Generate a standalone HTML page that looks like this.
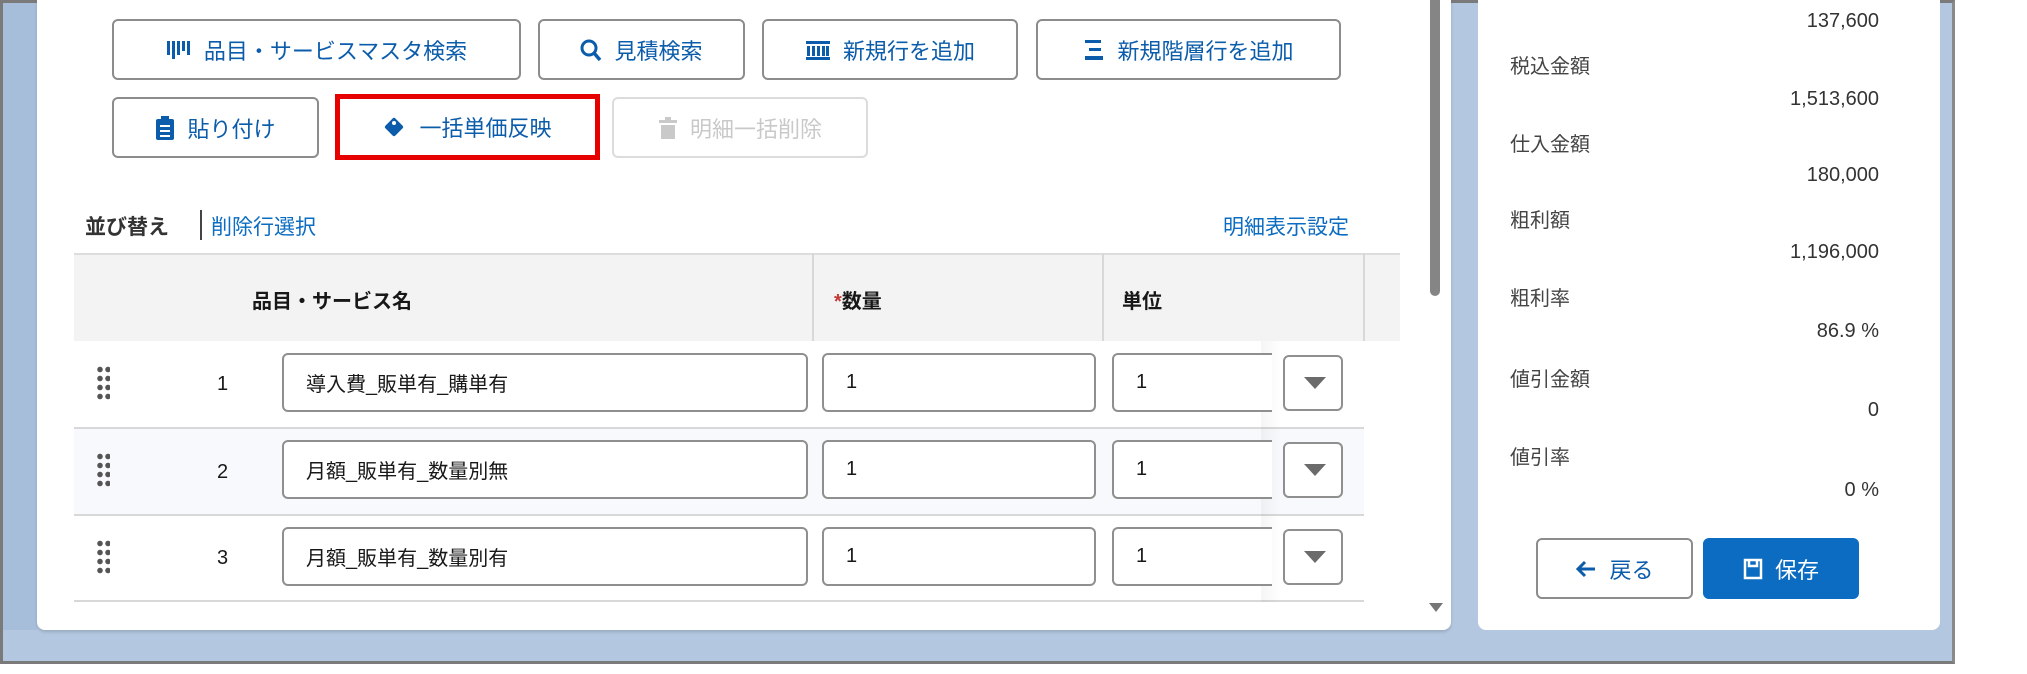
<!DOCTYPE html>
<html><head><meta charset="utf-8"><style>
*{box-sizing:border-box;margin:0;padding:0}
body{width:2027px;height:674px;background:#fff;position:relative;overflow:hidden;font-family:"Liberation Sans","Noto Sans CJK JP",sans-serif;color:#181818}
.frame{position:absolute;left:0;top:0;width:1955px;height:664px;background:#b3c7e0;border:3px solid #7a7a7a;border-right:3px solid #8a8a8a}
.abs{position:absolute}
.main{position:absolute;left:37px;top:0;width:1414px;height:630px;background:#fff;border-radius:0 0 8px 8px;box-shadow:0 2px 3px rgba(0,0,0,.15)}
.side{position:absolute;left:1478px;top:0;width:462px;height:630px;background:#fff;border-radius:0 0 8px 8px}
.btn{position:absolute;height:61px;border:2px solid #8c8c8c;border-radius:6px;background:#fff;color:#0b5cab;font-size:22px;display:flex;align-items:center;justify-content:center;gap:12px}
.btn.dis{color:#c9c9c9;border-color:#dcdcdc}
.link{color:#0b6cc1}
.inp{position:absolute;height:59px;border:2px solid #8f8f8f;border-radius:6px;background:#fff;font-size:20px;padding-left:22px;display:flex;align-items:center}
.dd{position:absolute;width:60px;height:56px;border:2px solid #8f8f8f;border-radius:6px;background:#fff}
.dd:after{content:"";position:absolute;left:19px;top:20px;border-left:11px solid transparent;border-right:11px solid transparent;border-top:12px solid #6b6b6b}
.dots{position:absolute;width:14px;height:36px;background-image:radial-gradient(circle,#555 2.5px,transparent 3px);background-size:8px 9px}
.num{position:absolute;font-size:20px}
.lab{position:absolute;left:32px;font-size:20px;color:#444}
.val{position:absolute;right:61px;font-size:20px;color:#333;text-align:right}
</style></head><body>
<div class="frame"></div>
<div class="abs" style="left:3px;top:3px;width:34px;height:627px;background:#a7bedb"></div>
<div class="main">
  <div class="btn" style="left:75px;top:19px;width:409px">
    <svg width="26" height="24" viewBox="0 0 26 24"><g fill="#0b5cab"><rect x="1" y="3" width="3" height="14"/><rect x="6" y="3" width="3" height="18"/><rect x="11" y="3" width="3" height="14"/><rect x="16" y="3" width="3" height="10"/><rect x="21" y="3" width="3" height="14"/></g></svg>品目・サービスマスタ検索</div>
  <div class="btn" style="left:501px;top:19px;width:207px">
    <svg width="22" height="24" viewBox="0 0 22 24"><circle cx="9" cy="10" r="7" fill="none" stroke="#0b5cab" stroke-width="3"/><path d="M14 15l6 7" stroke="#0b5cab" stroke-width="3.5"/></svg>見積検索</div>
  <div class="btn" style="left:725px;top:19px;width:256px">
    <svg width="26" height="22" viewBox="0 0 26 22"><g fill="#0b5cab"><rect x="1" y="2" width="24" height="3"/><rect x="2" y="7" width="3" height="10"/><rect x="7" y="7" width="3" height="10"/><rect x="12" y="7" width="3" height="10"/><rect x="17" y="7" width="3" height="10"/><rect x="21" y="7" width="3" height="10"/><rect x="1" y="18" width="24" height="3"/></g></svg>新規行を追加</div>
  <div class="btn" style="left:999px;top:19px;width:305px">
    <svg width="22" height="24" viewBox="0 0 22 24"><g fill="#0b5cab"><rect x="2" y="2" width="16" height="3"/><rect x="6" y="10" width="12" height="3"/><rect x="2" y="18" width="18" height="4"/></g></svg>新規階層行を追加</div>
  <div class="btn" style="left:75px;top:97px;width:207px">
    <svg width="20" height="26" viewBox="0 0 20 26"><rect x="1" y="4" width="18" height="21" rx="2" fill="#0b5cab"/><rect x="6" y="1" width="8" height="5" fill="#0b5cab"/><g fill="#fff"><rect x="5" y="10" width="10" height="2"/><rect x="5" y="15" width="10" height="2"/><rect x="5" y="20" width="10" height="2"/></g></svg>貼り付け</div>
  <div class="abs" style="left:298px;top:94px;width:265px;height:66px;border:5px solid #e60000"></div>
  <div class="abs" style="left:303px;top:99px;width:255px;height:56px;display:flex;align-items:center;justify-content:center;gap:14px;font-size:22px;color:#0b5cab">
    <svg width="22" height="22" viewBox="0 0 22 22"><rect x="4" y="4" width="14" height="14" rx="2" transform="rotate(45 11 11)" fill="#0b5cab"/><circle cx="11" cy="7" r="2" fill="#fff"/></svg>一括単価反映</div>
  <div class="btn dis" style="left:575px;top:97px;width:256px">
    <svg width="20" height="24" viewBox="0 0 20 24"><g fill="#c9c9c9"><rect x="1" y="4" width="18" height="3"/><rect x="7" y="1" width="6" height="3"/><rect x="3" y="9" width="14" height="14"/></g></svg>明細一括削除</div>
  <div class="abs" style="left:48px;top:211px;font-size:21px;font-weight:bold;color:#333">並び替え</div>
  <div class="abs" style="left:163px;top:210px;width:2px;height:30px;background:#444"></div>
  <div class="abs link" style="left:174px;top:211px;font-size:21px">削除行選択</div>
  <div class="abs link" style="left:1186px;top:211px;font-size:21px">明細表示設定</div>
  <div class="abs" style="left:37px;top:253px;width:1326px;height:88px;background:#f3f3f3;border-top:2px solid #ddd"></div>
  <div class="abs" style="left:775px;top:253px;width:2px;height:88px;background:#d8d8d8"></div>
  <div class="abs" style="left:1065px;top:253px;width:2px;height:88px;background:#d8d8d8"></div>
  <div class="abs" style="left:1326px;top:253px;width:2px;height:88px;background:#d8d8d8"></div>
  <div class="abs" style="left:215px;top:285px;font-size:20px;font-weight:bold">品目・サービス名</div>
  <div class="abs" style="left:797px;top:285px;font-size:20px;font-weight:bold"><span style="color:#c23934">*</span>数量</div>
  <div class="abs" style="left:1085px;top:285px;font-size:20px;font-weight:bold">単位</div>

  <div class="abs" style="left:37px;top:428px;width:1290px;height:87px;background:#f7f9fc"></div>
  <div class="abs" style="left:37px;top:427px;width:1290px;height:2px;background:#d8d8d8"></div>
  <div class="abs" style="left:37px;top:514px;width:1290px;height:2px;background:#d8d8d8"></div>
  <div class="abs" style="left:37px;top:600px;width:1290px;height:2px;background:#d8d8d8"></div>
  <div class="abs" style="left:1224px;top:341px;width:103px;height:261px;background:linear-gradient(90deg,rgba(0,0,0,.04),rgba(0,0,0,0) 20px)"></div>

  <div class="dots" style="left:59px;top:365px"></div><div class="num" style="left:180px;top:373px">1</div>
  <div class="inp" style="left:245px;top:353px;width:526px">導入費_販単有_購単有</div>
  <div class="inp" style="left:785px;top:353px;width:274px">1</div>
  <div class="inp" style="left:1075px;top:353px;width:160px;border-right:none;border-radius:6px 0 0 6px">1</div>
  <div class="dd" style="left:1246px;top:355px"></div>

  <div class="dots" style="left:59px;top:452px"></div><div class="num" style="left:180px;top:461px">2</div>
  <div class="inp" style="left:245px;top:440px;width:526px">月額_販単有_数量別無</div>
  <div class="inp" style="left:785px;top:440px;width:274px">1</div>
  <div class="inp" style="left:1075px;top:440px;width:160px;border-right:none;border-radius:6px 0 0 6px">1</div>
  <div class="dd" style="left:1246px;top:442px"></div>

  <div class="dots" style="left:59px;top:539px"></div><div class="num" style="left:180px;top:547px">3</div>
  <div class="inp" style="left:245px;top:527px;width:526px">月額_販単有_数量別有</div>
  <div class="inp" style="left:785px;top:527px;width:274px">1</div>
  <div class="inp" style="left:1075px;top:527px;width:160px;border-right:none;border-radius:6px 0 0 6px">1</div>
  <div class="dd" style="left:1246px;top:529px"></div>

  <div class="abs" style="left:1393px;top:0;width:10px;height:296px;background:#858585;border-radius:0 0 5px 5px"></div>
  <div class="abs" style="left:1392px;top:603px;border-left:7px solid transparent;border-right:7px solid transparent;border-top:9px solid #777"></div>
</div>
<div class="side">
  <div class="val" style="top:10px">137,600</div>
  <div class="lab" style="top:50px">税込金額</div>
  <div class="val" style="top:88px">1,513,600</div>
  <div class="lab" style="top:128px">仕入金額</div>
  <div class="val" style="top:164px">180,000</div>
  <div class="lab" style="top:204px">粗利額</div>
  <div class="val" style="top:241px">1,196,000</div>
  <div class="lab" style="top:282px">粗利率</div>
  <div class="val" style="top:320px">86.9 %</div>
  <div class="lab" style="top:363px">値引金額</div>
  <div class="val" style="top:399px">0</div>
  <div class="lab" style="top:441px">値引率</div>
  <div class="val" style="top:479px">0 %</div>
  <div class="btn" style="left:58px;top:538px;width:157px;color:#0b5cab">
    <svg width="22" height="18" viewBox="0 0 22 18"><path d="M20 9H4M10 2L3 9l7 7" fill="none" stroke="#0b5cab" stroke-width="3"/></svg>戻る</div>
  <div class="btn" style="left:225px;top:538px;width:156px;background:#0b6cc1;border-color:#0b6cc1;color:#fff">
    <svg width="20" height="22" viewBox="0 0 20 22"><path d="M2 2h16v18H2z M6 2v6h8V2" fill="none" stroke="#fff" stroke-width="2.5"/></svg>保存</div>
</div>
</body></html>
